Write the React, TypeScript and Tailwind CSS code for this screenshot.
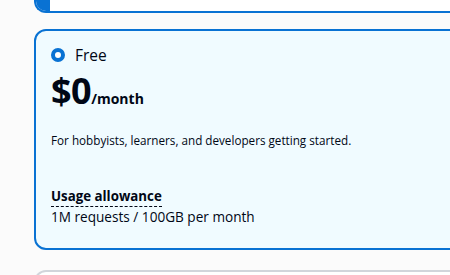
import React from 'react';

export default function App() {
    return (
        <div className="w-[450px] h-[275px] overflow-hidden bg-[#fbfbfb] text-[#000716]" style={{ fontFamily: '"Open Sans", "Noto Sans", Arial, sans-serif' }}>
            <div className="ml-[34px] w-[430px] h-[13px] flex bg-white border-l-2 border-b-2 border-[#0972d3] rounded-bl-[12px] overflow-hidden">
                <div className="w-[14px] h-full bg-[#0972d3]" />
            </div>
            <div className="ml-[34px] mt-[16px] w-[430px] h-[221px] bg-[#f0fbff] border-2 border-[#0972d3] rounded-[12px] pl-[15px] pt-[13px]">
                <div className="flex items-center gap-[10px] h-[22px]">
                    <span className="w-[14px] h-[14px] rounded-full border-[4px] border-[#0972d3] bg-white" />
                    <span className="text-[15.5px] leading-[22px]">Free</span>
                </div>
                <div className="flex items-baseline mt-[3px] h-[44px] leading-[44px]">
                    <span className="text-[36px] font-bold tracking-[-0.5px]">$0</span>
                    <span className="text-[14px] font-bold">/month</span>
                </div>
                <p className="mt-[19px] text-[11.7px] leading-[16px]">For hobbyists, learners, and developers getting started.</p>
                <div className="mt-[35px]">
                    <span className="text-[13.3px] leading-[19px] font-bold border-b border-dashed border-[#000716] inline-block">Usage allowance</span>
                </div>
                <div className="text-[13.6px] leading-[20px]">1M requests / 100GB per month</div>
            </div>
            <div className="ml-[34px] mt-[20px] w-[430px] h-[40px] bg-white border-2 border-[#d1d5db] rounded-[12px]" />
        </div>
    );
}
